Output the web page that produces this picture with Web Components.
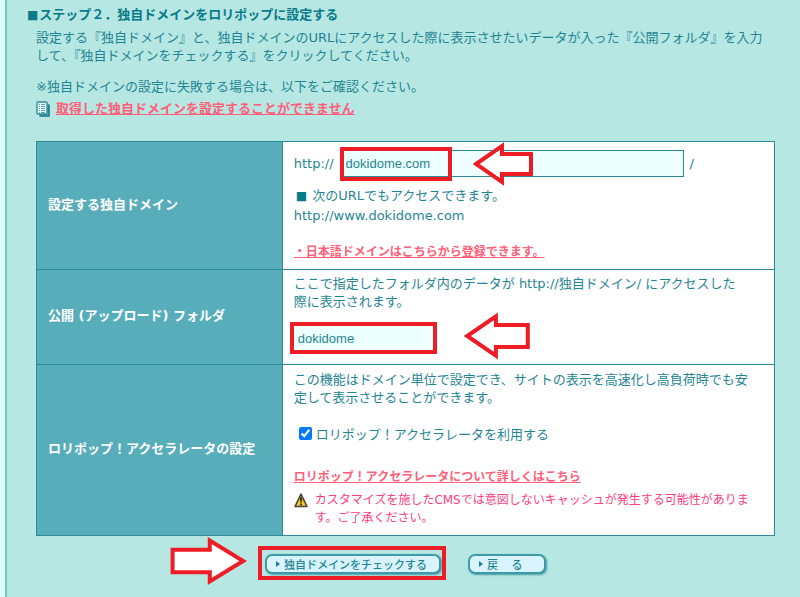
<!DOCTYPE html>
<html lang="ja">
<head>
<meta charset="utf-8">
<meta name="viewport" content="width=device-width, initial-scale=1">
<title>独自ドメイン設定</title>
<style>
  body {
    margin: 0;
    background: #daffff;
    color: #1f8593;
    font: 13px/18px 'DejaVu Sans', 'Noto Sans CJK JP', sans-serif;
  }
</style>
</head>
<body>
<page-panel>
  <step-guide></step-guide>
  <domain-settings></domain-settings>
  <form-actions></form-actions>
</page-panel>

<script>
// outer column with the rule on the left
class PagePanel extends HTMLElement {
  constructor() {
    super();
    this.attachShadow({ mode: 'open' }).innerHTML = `
      <style>
        :host {
          display: block;
          box-sizing: border-box;
          min-height: 100vh;
          margin-left: 5px;
          padding: 6px 25px 12px 29px;
          border-left: 2px solid #7fc3c8;
          background: #b6e7e3;
        }
      </style>
      <slot></slot>
    `;
  }
}

class DocIcon extends HTMLElement {
  constructor() {
    super();
    this.attachShadow({ mode: 'open' }).innerHTML = `
      <style>
        :host { display: block; width: 15px; height: 17px; }
        svg { display: block; }
      </style>
      <svg width="15" height="17" viewBox="0 0 15 17" aria-hidden="true">
        <path d="M3 2h9l2 2v12H5l-3-3z" fill="#7ab9c3"/>
        <path d="M3.5 14.8h9.3V3.5" fill="none" stroke="#2a8492" stroke-width="2" stroke-linejoin="round"/>
        <rect x="1" y="1" width="10" height="12" rx="1" fill="#e8fbfc" stroke="#338b98" stroke-width="1.4"/>
        <path d="M3 3.5h1M5 3.5h4M3 5.5h1M5 5.5h4M3 7.5h1M5 7.5h4M3 9.5h1M5 9.5h4M3 11.5h1M5 11.5h4" stroke="#5ba4ae"/>
      </svg>
    `;
  }
}

class WarningIcon extends HTMLElement {
  constructor() {
    super();
    this.attachShadow({ mode: 'open' }).innerHTML = `
      <style>
        :host { display: block; width: 14px; height: 15px; }
        svg { display: block; }
      </style>
      <svg width="14" height="15" viewBox="0 0 14 15" aria-hidden="true">
        <path d="M7 1.2 13 13.5H1z" fill="#f3c52c" stroke="#4a4436" stroke-width="1.6" stroke-linejoin="round"/>
        <path d="M6 4.5h2l-.4 5H6.4zM6.1 10.4h1.8v1.8H6.1z" fill="#241f14"/>
      </svg>
    `;
  }
}

// red arrow, points left unless dir="right"
class CalloutArrow extends HTMLElement {
  constructor() {
    super();
    this.attachShadow({ mode: 'open' }).innerHTML = `
      <style>
        :host { display: block; width: 60px; height: 44px; pointer-events: none; }
        :host([dir='right']) svg { transform: scaleX(-1); }
        svg { display: block; width: 100%; height: 100%; }
        polygon { fill: #fff; stroke: #ee1c25; stroke-width: 4; vector-effect: non-scaling-stroke; }
      </style>
      <svg viewBox="0 0 60 44" preserveAspectRatio="none" aria-hidden="true">
        <polygon points="3,22 29,4 29,12 58,12 58,32 29,32 29,40"/>
      </svg>
    `;
  }
}

class PillButton extends HTMLElement {
  constructor() {
    super();
    this.attachShadow({ mode: 'open' }).innerHTML = `
      <style>
        :host { display: block; }
        button {
          display: flex;
          align-items: center;
          gap: 4px;
          box-sizing: border-box;
          width: 100%;
          height: 20px;
          margin: 0;
          padding: 0 9px;
          border: 2px solid #3d9aa6;
          border-radius: 7px;
          background: #d9f4ff;
          box-shadow: 1px 1px 2px #4b9ba5;
          color: #1f8593;
          font: 500 11px/16px 'Noto Sans CJK JP', sans-serif;
          white-space: nowrap;
          cursor: pointer;
        }
        svg { flex: none; }
      </style>
      <button type="button">
        <svg width="4" height="6" viewBox="0 0 4 6" aria-hidden="true"><path d="M0 0l4 3-4 3z" fill="#1f7f8c"/></svg>
        <span><slot></slot></span>
      </button>
    `;
  }
}

class StepGuide extends HTMLElement {
  constructor() {
    super();
    this.attachShadow({ mode: 'open' }).innerHTML = `
      <style>
        :host { display: block; margin-bottom: 23px; }
        h2 {
          display: flex;
          gap: 1px;
          margin: 0 0 5px -9px;
          color: #087b88;
          font-size: 13px;
          line-height: 18px;
        }
        .mark { font-size: 12px; }
        p { margin: 0 0 13px; }
        .note { margin-bottom: 4px; }
        .help { display: flex; align-items: center; gap: 5px; }
        a { color: #ff5f79; font-weight: bold; }
      </style>
      <h2><span class="mark">■</span><span>ステップ２．独自ドメインをロリポップに設定する</span></h2>
      <p>設定する『独自ドメイン』と、独自ドメインのURLにアクセスした際に表示させたいデータが入った『公開フォルダ』を入力<br>して、『独自ドメインをチェックする』をクリックしてください。</p>
      <p class="note">※独自ドメインの設定に失敗する場合は、以下をご確認ください。</p>
      <div class="help">
        <doc-icon></doc-icon>
        <a href="#help">取得した独自ドメインを設定することができません</a>
      </div>
    `;
  }
}

class DomainSettings extends HTMLElement {
  constructor() {
    super();
    this.attachShadow({ mode: 'open' }).innerHTML = `
      <style>
        :host { display: block; }
        table {
          width: 100%;
          border-collapse: collapse;
          table-layout: fixed;
        }
        th, td { border: 1px solid #2b8d9a; text-align: left; }
        th {
          width: 33.3%;
          box-sizing: border-box;
          padding: 0 11px 2px;
          background: #58adba;
          color: #fff;
        }
        td { padding: 8px 11px; background: #fff; }
        p { margin: 0; }
        input[type='text'] {
          box-sizing: border-box;
          height: 27px;
          margin: 0;
          padding: 0 5px;
          border: 1px solid #2b8d9a;
          border-radius: 0;
          background: #eeffff;
          color: #1f8593;
          font: 13px 'Liberation Sans', sans-serif;
        }
        .url { display: flex; align-items: center; gap: 6px; }
        .field { position: relative; flex: 0 1 344px; }
        .field input { display: block; width: 100%; }
        .url-note { margin: 9px 0 17px; line-height: 20px; }
        .mark { margin: 0 1px 0 2px; color: #087b88; font-size: 12px; }
        .frame {
          position: absolute;
          top: -3px;
          left: 0;
          box-sizing: border-box;
          width: 112px;
          height: 34px;
          border: 4px solid #ee1c25;
          pointer-events: none;
        }
        .field callout-arrow { position: absolute; top: -8px; left: 133px; }
        a { color: #ff5f79; font-size: 12px; font-weight: bold; }
        .folder-cell { padding: 5px 11px 10px; }
        .folder { position: relative; width: 147px; margin: 11px 0 0 -4px; }
        .folder input {
          display: block;
          width: 100%;
          height: 32px;
          padding: 0 4px;
          border: 4px solid #ee1c25;
        }
        .folder callout-arrow {
          position: absolute;
          top: -10px;
          left: 174px;
          width: 66px;
          height: 48px;
        }
        .accel-cell { padding: 6px 11px 8px; }
        .accel { display: flex; align-items: center; gap: 4px; margin: 19px 0 24px 5px; }
        .accel input { width: 13px; height: 13px; margin: 0 0 4px; accent-color: #0078ff; }
        .caution {
          display: flex;
          gap: 7px;
          margin-top: 5px;
          color: #ff3d7f;
          font-size: 12px;
        }
        .caution warning-icon { flex: none; margin-top: 2px; }
      </style>
      <table>
        <tr>
          <th scope="row"><label for="domain">設定する独自ドメイン</label></th>
          <td>
            <div class="url">
              <span>http://</span>
              <div class="field">
                <input type="text" id="domain" value="dokidome.com">
                <div class="frame"></div>
                <callout-arrow></callout-arrow>
              </div>
              <span>/</span>
            </div>
            <p class="url-note"><span class="mark">■</span> 次のURLでもアクセスできます。<br>http://www.dokidome.com</p>
            <p><a href="#idn">・日本語ドメインはこちらから登録できます。</a></p>
          </td>
        </tr>
        <tr>
          <th scope="row"><label for="folder">公開 (アップロード) フォルダ</label></th>
          <td class="folder-cell">
            <p>ここで指定したフォルダ内のデータが http://独自ドメイン/ にアクセスした<br>際に表示されます。</p>
            <div class="folder">
              <input type="text" id="folder" value="dokidome">
              <callout-arrow></callout-arrow>
            </div>
          </td>
        </tr>
        <tr>
          <th scope="row">ロリポップ！アクセラレータの設定</th>
          <td class="accel-cell">
            <p>この機能はドメイン単位で設定でき、サイトの表示を高速化し高負荷時でも安<br>定して表示させることができます。</p>
            <div class="accel">
              <input type="checkbox" id="accel" checked>
              <label for="accel">ロリポップ！アクセラレータを利用する</label>
            </div>
            <p><a href="#accelerator">ロリポップ！アクセラレータについて詳しくはこちら</a></p>
            <div class="caution">
              <warning-icon></warning-icon>
              <p>カスタマイズを施したCMSでは意図しないキャッシュが発生する可能性がありま<br>す。ご了承ください。</p>
            </div>
          </td>
        </tr>
      </table>
    `;
  }
}

class FormActions extends HTMLElement {
  constructor() {
    super();
    this.attachShadow({ mode: 'open' }).innerHTML = `
      <style>
        :host {
          display: flex;
          justify-content: center;
          gap: 27px;
          margin-top: 18px;
        }
        .check { position: relative; width: 176px; }
        .back { width: 78px; }
        .frame {
          position: absolute;
          top: -8px;
          left: -7px;
          box-sizing: border-box;
          width: 188px;
          height: 34px;
          border: 4px solid #ee1c25;
          pointer-events: none;
        }
        .check callout-arrow {
          position: absolute;
          top: -18px;
          left: -95px;
          width: 77px;
          height: 50px;
        }
      </style>
      <div class="check">
        <pill-button>独自ドメインをチェックする</pill-button>
        <div class="frame"></div>
        <callout-arrow dir="right"></callout-arrow>
      </div>
      <pill-button class="back">戻　 る</pill-button>
    `;
  }
}

customElements.define('page-panel', PagePanel);
customElements.define('doc-icon', DocIcon);
customElements.define('warning-icon', WarningIcon);
customElements.define('callout-arrow', CalloutArrow);
customElements.define('pill-button', PillButton);
customElements.define('step-guide', StepGuide);
customElements.define('domain-settings', DomainSettings);
customElements.define('form-actions', FormActions);
</script>
</body>
</html>
